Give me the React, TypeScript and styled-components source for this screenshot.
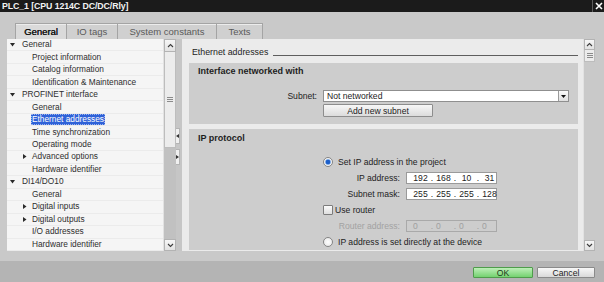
import styled, { createGlobalStyle } from "styled-components";

const GlobalStyle = createGlobalStyle`
  html, body {
    margin: 0;
    padding: 0;
  }
  body {
    width: 604px;
    height: 282px;
    overflow: hidden;
    background: #c9c9c9;
    font-family: "Liberation Sans", Arial, sans-serif;
    color: #1e1e1e;
  }
  * {
    box-sizing: border-box;
  }
`;

type TreeItem = {
  label: string;
  level: 0 | 1;
  expander?: "open" | "closed";
  selected?: boolean;
};

const tree: TreeItem[] = [
  { label: "General", level: 0, expander: "open" },
  { label: "Project information", level: 1 },
  { label: "Catalog information", level: 1 },
  { label: "Identification & Maintenance", level: 1 },
  { label: "PROFINET interface", level: 0, expander: "open" },
  { label: "General", level: 1 },
  { label: "Ethernet addresses", level: 1, selected: true },
  { label: "Time synchronization", level: 1 },
  { label: "Operating mode", level: 1 },
  { label: "Advanced options", level: 1, expander: "closed" },
  { label: "Hardware identifier", level: 1 },
  { label: "DI14/DO10", level: 0, expander: "open" },
  { label: "General", level: 1 },
  { label: "Digital inputs", level: 1, expander: "closed" },
  { label: "Digital outputs", level: 1, expander: "closed" },
  { label: "I/O addresses", level: 1 },
  { label: "Hardware identifier", level: 1 },
];

const tabs = ["General", "IO tags", "System constants", "Texts"];
const tabWidths = [52, 51, 99, 46];

function Arrow({ dir }: { dir: "up" | "down" }) {
  return (
    <svg width="7" height="5" viewBox="0 0 7 5">
      <path
        d={dir === "up" ? "M1 4 L3.5 1.5 L6 4" : "M1 1 L3.5 3.5 L6 1"}
        fill="none"
        stroke="#3c3c3c"
        strokeWidth="1.1"
      />
    </svg>
  );
}

function Grip() {
  return (
    <svg width="6" height="5" viewBox="0 0 6 5">
      <path d="M0 0.5 H6 M0 2.5 H6 M0 4.5 H6" stroke="#8a8a8a" strokeWidth="1" />
    </svg>
  );
}

function Expander({ kind }: { kind?: "open" | "closed" }) {
  if (!kind) return null;
  return kind === "open" ? (
    <svg width="5" height="4" viewBox="0 0 5 4">
      <path d="M0 0 H5 L2.5 3.5 Z" fill="#2a2a2a" />
    </svg>
  ) : (
    <svg width="4" height="5" viewBox="0 0 4 5">
      <path d="M0 0 V5 L3.5 2.5 Z" fill="#2a2a2a" />
    </svg>
  );
}

function IpField({ octets, disabled }: { octets: string[]; disabled?: boolean }) {
  return (
    <IpBox $disabled={disabled}>
      {octets.map((o, i) => (
        <Octets key={i}>
          <Octet $left={disabled}>{o}</Octet>
          {i < octets.length - 1 && <Dot>.</Dot>}
        </Octets>
      ))}
    </IpBox>
  );
}

export default function App() {
  return (
    <>
      <GlobalStyle />
      <Dialog>
        <TitleBar>
          <span>PLC_1 [CPU 1214C DC/DC/Rly]</span>
          <CloseBtn>
            <svg width="8" height="8" viewBox="0 0 8 8">
              <path d="M1 1 L7 7 M7 1 L1 7" stroke="#ffffff" strokeWidth="1.6" />
            </svg>
          </CloseBtn>
        </TitleBar>

        <TabBar>
          {tabs.map((t, i) => (
            <Tab key={t} $active={i === 0} $width={tabWidths[i]}>
              {t}
            </Tab>
          ))}
        </TabBar>

        <Body>
          <TreeList>
            {tree.map((item, i) => (
              <TreeRow key={i} $level={item.level}>
                <Toggle $level={item.level}>
                  <Expander kind={item.expander} />
                </Toggle>
                <TreeLabel $selected={item.selected}>{item.label}</TreeLabel>
              </TreeRow>
            ))}
          </TreeList>
          <ScrollBar $width={13}>
            <ScrollBtn $height={13}>
              <Arrow dir="up" />
            </ScrollBtn>
            <Thumb $height={96}>
              <Grip />
            </Thumb>
            <Track />
            <ScrollBtn $height={12}>
              <Arrow dir="down" />
            </ScrollBtn>
          </ScrollBar>

          <Splitter>
            <SplitTab>
              <svg width="3" height="4" viewBox="0 0 3 4">
                <path d="M3 0 V4 L0 2 Z" fill="#333" />
              </svg>
            </SplitTab>
            <SplitTab>
              <svg width="3" height="4" viewBox="0 0 3 4">
                <path d="M0 0 V4 L3 2 Z" fill="#333" />
              </svg>
            </SplitTab>
          </Splitter>

          <RightPanel>
            <PanelHeading>
              <span>Ethernet addresses</span>
              <Rule />
            </PanelHeading>

            <Section>
              <SectionTitle>Interface networked with</SectionTitle>
              <SubnetRow>
                <FieldLabel $width={119}>Subnet:</FieldLabel>
                <Select>
                  <span>Not networked</span>
                  <DropBtn>
                    <svg width="5" height="3" viewBox="0 0 5 3">
                      <path d="M0 0 H5 L2.5 3 Z" fill="#111" />
                    </svg>
                  </DropBtn>
                </Select>
              </SubnetRow>
              <AddButton>Add new subnet</AddButton>
            </Section>

            <Section $grow>
              <SectionTitle>IP protocol</SectionTitle>
              <Options>
                <OptionRow>
                  <Radio $checked />
                  <OptionText>Set IP address in the project</OptionText>
                </OptionRow>
                <OptionRow>
                  <FieldLabel $width={77}>IP address:</FieldLabel>
                  <IpField octets={["192", "168", "10", "31"]} />
                </OptionRow>
                <OptionRow>
                  <FieldLabel $width={77}>Subnet mask:</FieldLabel>
                  <IpField octets={["255", "255", "255", "128"]} />
                </OptionRow>
                <OptionRow>
                  <Check />
                  <OptionText $tight>Use router</OptionText>
                </OptionRow>
                <OptionRow>
                  <FieldLabel $width={77} $muted>
                    Router address:
                  </FieldLabel>
                  <IpField octets={["0", "0", "0", "0"]} disabled />
                </OptionRow>
                <OptionRow>
                  <Radio />
                  <OptionText>IP address is set directly at the device</OptionText>
                </OptionRow>
              </Options>
            </Section>
          </RightPanel>

          <ScrollBar $width={12}>
            <ScrollBtn $height={11}>
              <Arrow dir="up" />
            </ScrollBtn>
            <Thumb $height={12}>
              <Grip />
            </Thumb>
            <Track $light />
            <ScrollBtn $height={11}>
              <Arrow dir="down" />
            </ScrollBtn>
          </ScrollBar>
        </Body>

        <Footer>
          <FooterButton $primary>OK</FooterButton>
          <FooterButton>Cancel</FooterButton>
        </Footer>
      </Dialog>
    </>
  );
}

const Dialog = styled.div`
  width: 604px;
  height: 282px;
  display: flex;
  flex-direction: column;
  background: #c9c9c9;
`;

const TitleBar = styled.div`
  height: 12px;
  flex: none;
  background: #1b1b1b;
  color: #f2f2f2;
  display: flex;
  align-items: center;
  justify-content: space-between;
  padding-left: 2px;
  font-size: 8.8px;
  font-weight: bold;
  letter-spacing: -0.1px;
`;

const CloseBtn = styled.div`
  width: 12px;
  height: 12px;
  border-left: 1px solid #5c5c5c;
  display: flex;
  align-items: center;
  justify-content: center;
`;

const TabBar = styled.div`
  height: 17px;
  flex: none;
  margin-top: 10px;
  padding-left: 15px;
  display: flex;
  align-items: flex-end;
`;

const Tab = styled.div<{ $active?: boolean; $width: number }>`
  width: ${(p) => p.$width}px;
  height: 16px;
  display: flex;
  align-items: center;
  justify-content: center;
  background: ${(p) => (p.$active ? "#dadada" : "#d0d0d0")};
  border: 1px solid #a4a4a4;
  border-bottom: none;
  border-left: ${(p) => (p.$active ? "1px solid #a4a4a4" : "none")};
  box-shadow: inset 0 1px 0 #ececec;
  font-size: 9.5px;
  color: ${(p) => (p.$active ? "#111111" : "#5a5a5a")};
  text-shadow: ${(p) => (p.$active ? "0.3px 0 0 #111" : "none")};
`;

const Body = styled.div`
  height: 212px;
  flex: none;
  display: flex;
  padding-left: 7px;
  padding-right: 9px;
`;

const TreeList = styled.div`
  width: 156px;
  background: #f5f5f5;
  display: flex;
  flex-direction: column;
  overflow: hidden;
`;

const TreeRow = styled.div<{ $level: number }>`
  height: 12.47px;
  flex: none;
  display: flex;
  align-items: center;
  padding-left: ${(p) => (p.$level === 0 ? 3 : 16)}px;
  border-bottom: 1px solid #ebebeb;
  font-size: 8.3px;
  color: #2e2e2e;
  white-space: nowrap;
`;

const Toggle = styled.div<{ $level: number }>`
  width: ${(p) => (p.$level === 0 ? 12 : 9)}px;
  display: flex;
  align-items: center;
`;

const TreeLabel = styled.span<{ $selected?: boolean }>`
  padding: 0 1px;
  margin-left: -1px;
  line-height: 11px;
  ${(p) =>
    p.$selected &&
    `
    background: #2f62d8;
    color: #ffffff;
    outline: 1px dotted #9db4ee;
    outline-offset: -1px;
  `}
`;

const ScrollBar = styled.div<{ $width: number }>`
  width: ${(p) => p.$width}px;
  flex: none;
  display: flex;
  flex-direction: column;
  background: #c4c4c4;
  border-left: 1px solid #e2e2e2;
`;

const ScrollBtn = styled.div<{ $height: number }>`
  height: ${(p) => p.$height}px;
  flex: none;
  display: flex;
  align-items: center;
  justify-content: center;
  background: linear-gradient(#f6f6f6, #e2e2e2);
  border: 1px solid #b3b3b3;
`;

const Thumb = styled.div<{ $height: number }>`
  height: ${(p) => p.$height}px;
  flex: none;
  display: flex;
  align-items: center;
  justify-content: center;
  background: #ececec;
  border: 1px solid #bdbdbd;
  border-top: none;
`;

const Track = styled.div<{ $light?: boolean }>`
  flex: 1;
  background: ${(p) => (p.$light ? "#c9c9c9" : "#c1c1c1")};
`;

const Splitter = styled.div`
  width: 6px;
  flex: none;
  display: flex;
  flex-direction: column;
  justify-content: center;
  gap: 5px;
  padding-top: 2px;
  background: #c6c6c6;
`;

const SplitTab = styled.div`
  width: 4px;
  height: 16px;
  display: flex;
  align-items: center;
  justify-content: center;
  background: #f0f0f0;
  border: 1px solid #b4b4b4;
  border-left: none;
`;

const RightPanel = styled.div`
  width: 401px;
  flex: none;
  background: #ebebeb;
  padding: 7px 5px 0 7px;
  display: flex;
  flex-direction: column;
  overflow: hidden;
`;

const PanelHeading = styled.div`
  height: 12px;
  flex: none;
  display: flex;
  align-items: center;
  padding-left: 3px;
  margin-bottom: 5px;
  font-size: 8.8px;
  color: #232323;
  white-space: nowrap;
`;

const Rule = styled.div`
  flex: 1;
  align-self: flex-end;
  margin: 0 0 2px 5px;
  border-bottom: 1px solid #5e5e5e;
`;

const Section = styled.div<{ $grow?: boolean }>`
  flex: ${(p) => (p.$grow ? "1" : "none")};
  height: ${(p) => (p.$grow ? "auto" : "61px")};
  background: #cdcdcd;
  padding: ${(p) => (p.$grow ? "3px" : "2px")} 9px 0;
  margin-bottom: 5px;
  display: flex;
  flex-direction: column;
`;

const SectionTitle = styled.div`
  height: 12px;
  line-height: 12px;
  font-size: 9px;
  font-weight: bold;
  color: #1d1d1d;
`;

const SubnetRow = styled.div`
  display: flex;
  align-items: center;
  gap: 6px;
  margin-top: 13px;
  height: 12px;
`;

const FieldLabel = styled.span<{ $width: number; $muted?: boolean }>`
  width: ${(p) => p.$width}px;
  flex: none;
  text-align: right;
  font-size: 8.6px;
  color: ${(p) => (p.$muted ? "#a2a2a2" : "#222222")};
  white-space: nowrap;
`;

const Select = styled.div`
  width: 248px;
  height: 12px;
  display: flex;
  align-items: center;
  justify-content: space-between;
  background: #ffffff;
  border: 1px solid #8f8f8f;
  padding-left: 3px;
  font-size: 8.6px;
`;

const DropBtn = styled.div`
  width: 10px;
  height: 10px;
  display: flex;
  align-items: center;
  justify-content: center;
  background: linear-gradient(#fafafa, #e0e0e0);
  border-left: 1px solid #9a9a9a;
`;

const AddButton = styled.div`
  width: 110px;
  height: 13px;
  margin: 2px 0 0 125px;
  display: flex;
  align-items: center;
  justify-content: center;
  background: linear-gradient(#f7f7f7, #dcdcdc);
  border: 1px solid #8d8d8d;
  border-radius: 1px;
  font-size: 8.6px;
  color: #222;
`;

const Options = styled.div`
  margin: 10px 0 0 125px;
  display: flex;
  flex-direction: column;
`;

const OptionRow = styled.div`
  height: 16px;
  display: flex;
  align-items: center;
  gap: 6px;
`;

const OptionText = styled.span<{ $tight?: boolean }>`
  font-size: 8.6px;
  color: #222;
  margin-left: ${(p) => (p.$tight ? "-4px" : "-1px")};
  white-space: nowrap;
`;

const Radio = styled.span<{ $checked?: boolean }>`
  width: 10px;
  height: 10px;
  border-radius: 50%;
  border: 1px solid #858585;
  background: ${(p) =>
    p.$checked
      ? "radial-gradient(circle, #1d5fc9 0 2px, #8fb6ea 2.6px, #f4f4f4 3.4px)"
      : "radial-gradient(circle, #ffffff, #e4e4e4)"};
`;

const Check = styled.span`
  width: 10px;
  height: 10px;
  border: 1px solid #7c7c7c;
  border-radius: 1px;
  background: linear-gradient(#fbfbfb, #dedede);
`;

const IpBox = styled.div<{ $disabled?: boolean }>`
  width: 91px;
  height: 12px;
  display: flex;
  align-items: center;
  padding-left: 6px;
  background: ${(p) => (p.$disabled ? "#cdcdcd" : "#ffffff")};
  border: 1px solid ${(p) => (p.$disabled ? "#a9a9a9" : "#9a9a9a")};
  font-size: 8.6px;
  color: ${(p) => (p.$disabled ? "#a0a0a0" : "#222222")};
`;

const Octets = styled.span`
  display: flex;
`;

const Octet = styled.span<{ $left?: boolean }>`
  width: 15px;
  text-align: ${(p) => (p.$left ? "left" : "center")};
`;

const Dot = styled.span`
  width: 8px;
  text-align: center;
`;

const Footer = styled.div`
  flex: 1;
  margin-top: 10px;
  background: #b4b4b4;
  display: flex;
  align-items: flex-start;
  justify-content: flex-end;
  gap: 4px;
  padding: 6px 9px 0 0;
`;

const FooterButton = styled.div<{ $primary?: boolean }>`
  width: ${(p) => (p.$primary ? 60 : 58)}px;
  height: 11px;
  display: flex;
  align-items: center;
  justify-content: center;
  font-size: 8.6px;
  color: ${(p) => (p.$primary ? "#1c3a1a" : "#222")};
  background: ${(p) =>
    p.$primary
      ? "linear-gradient(#bdefb8, #74d270)"
      : "linear-gradient(#f7f7f7, #d9d9d9)"};
  border: 1px solid ${(p) => (p.$primary ? "#4f9c4b" : "#8a8a8a")};
  border-radius: 1px;
`;
